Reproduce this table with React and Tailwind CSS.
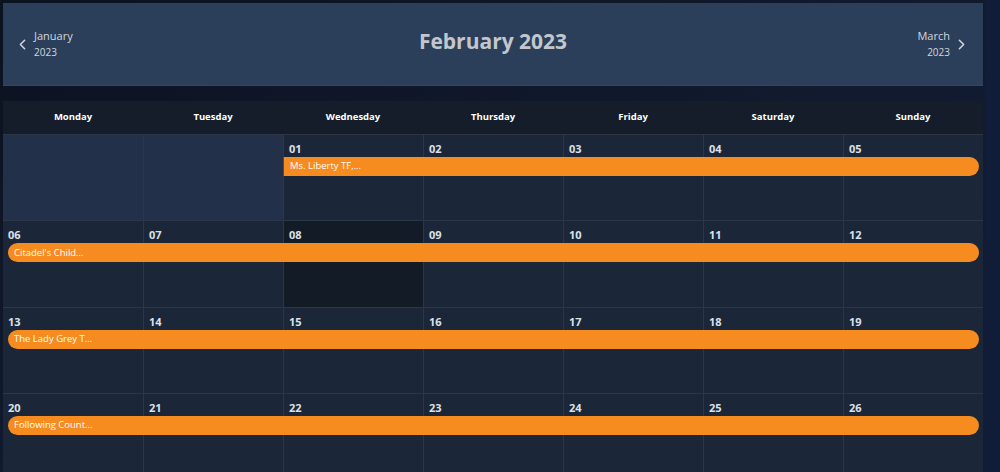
import { ChevronLeft, ChevronRight } from 'lucide-react';

const days = ['Monday', 'Tuesday', 'Wednesday', 'Thursday', 'Friday', 'Saturday', 'Sunday'];

const weeks = [
  { cells: [null, null, '01', '02', '03', '04', '05'], event: 'Ms. Liberty TF,...', start: 2 },
  { cells: ['06', '07', '08', '09', '10', '11', '12'], event: "Citadel's Child...", start: 0 },
  { cells: ['13', '14', '15', '16', '17', '18', '19'], event: 'The Lady Grey T...', start: 0 },
  { cells: ['20', '21', '22', '23', '24', '25', '26'], event: 'Following Count...', start: 0 },
];

const NavMonth = ({ month, year, align }) => (
  <div className={`flex flex-col ${align === 'right' ? 'items-end' : 'items-start'} text-[#d3d7dd]`}>
    <span className="text-[11px] leading-[16px]">{month}</span>
    <span className="text-[10px] leading-[16px]">{year}</span>
  </div>
);

const WeekRow = ({ week }) => {
  const left = week.start === 0 ? 5 : week.start * 140;
  return (
    <div className="relative flex h-[86.3px] border-t border-[#2b3649]">
      {week.cells.map((d, i) => (
        <div
          key={i}
          className={`w-[140px] h-full ${i > 0 ? 'border-l border-[#2b3649]' : ''} ${
            d === null ? 'bg-[#22304a]' : d === '08' ? 'bg-[#131b27]' : 'bg-[#1c2639]'
          }`}
        >
          {d && (
            <div className="px-[5px] pt-[6px] text-[11px] leading-[16px] font-bold text-[#dde1e6]">{d}</div>
          )}
        </div>
      ))}
      {/* event bar spanning the week */}
      <div
        className={`absolute top-[22px] right-[4px] h-[19px] bg-[#f68b1f] flex items-center text-[9.5px] text-white pl-[6px] ${
          week.start === 0 ? 'rounded-full' : 'rounded-r-full border-l border-[#5a4a3a]'
        }`}
        style={{ left }}
      >
        {week.event}
      </div>
    </div>
  );
};

export default function App() {
  return (
    <div
      className="relative w-[1000px] h-[472px] overflow-hidden bg-[#0d1529]"
      style={{ fontFamily: '"Open Sans", "Noto Sans", sans-serif' }}
    >
      <div className="absolute inset-0 bg-gradient-to-br from-[#0b1220] via-[#111a2e] to-[#101c3a]" />
      <div className="relative flex h-full">
        <div className="w-[985px] pl-[3px] pt-[3px] pr-[2px]">
          {/* Month header */}
          <div className="relative h-[83px] bg-[#2c3f5a] flex items-center justify-between pl-[11px] pr-[13px] border-b border-[#34475f]">
            <div className="flex items-center gap-[3px]">
              <ChevronLeft className="w-[17px] h-[17px] text-[#d3d7dd]" strokeWidth={2.2} />
              <NavMonth month="January" year="2023" />
            </div>
            <div className="absolute left-0 right-0 top-[21px] text-center text-[21px] leading-[34px] font-bold text-[#c3c7cc] pointer-events-none">
              February 2023
            </div>
            <div className="flex items-center gap-[3px]">
              <NavMonth month="March" year="2023" align="right" />
              <ChevronRight className="w-[17px] h-[17px] text-[#d3d7dd]" strokeWidth={2.2} />
            </div>
          </div>

          {/* Calendar */}
          <div className="mt-[15px] w-[980px]">
            <div className="flex h-[33px] bg-[#141d29]">
              {days.map((d) => (
                <div key={d} className="w-[140px] flex items-center justify-center text-[9.5px] font-bold text-white">
                  {d}
                </div>
              ))}
            </div>
            {weeks.map((w, i) => (
              <WeekRow key={i} week={w} />
            ))}
          </div>
        </div>
        <div className="flex-1 bg-[#111c38]" />
      </div>
    </div>
  );
}
